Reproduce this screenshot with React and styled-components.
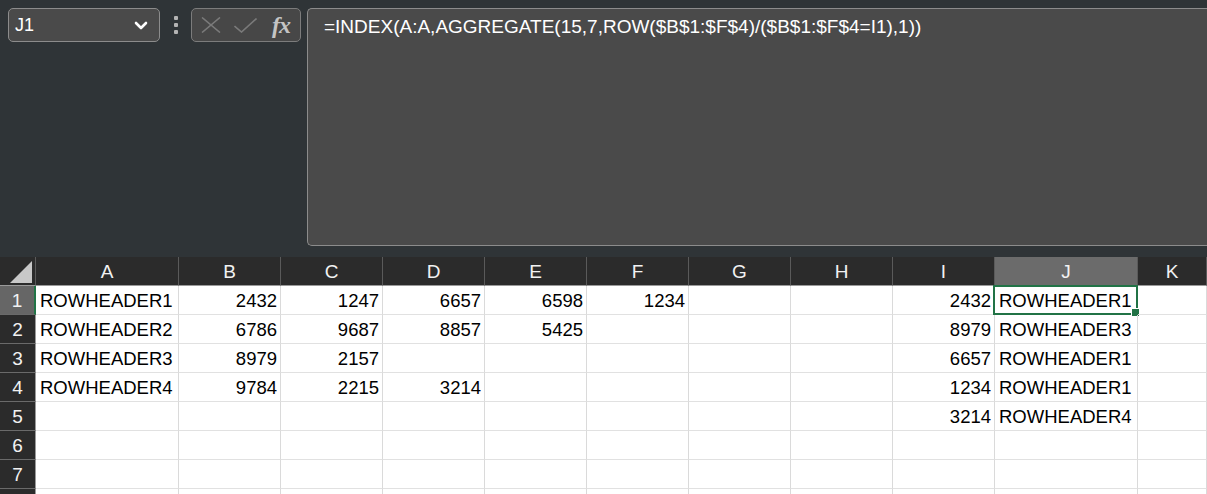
import React from "react";
import styled, { createGlobalStyle } from "styled-components";

const GlobalStyle = createGlobalStyle`
  html, body {
    margin: 0;
    padding: 0;
    background: #2f3437;
    overflow: hidden;
  }
  * { box-sizing: border-box; }
`;

// 상단 수식 입력줄
const Page = styled.div`
  width: 1207px;
  height: 494px;
  overflow: hidden;
  display: flex;
  flex-direction: column;
  background: #2f3437;
  font-family: "Liberation Sans", Arial, sans-serif;
`;

const FormulaBar = styled.div`
  display: flex;
  align-items: flex-start;
  padding: 8px 0 11px 8px;
  height: 257px;
  flex-shrink: 0;
`;

const NameBox = styled.div`
  width: 152px;
  height: 34px;
  border: 1px solid #8c8c8c;
  border-radius: 5px;
  background: #4a4a4a;
  display: flex;
  align-items: center;
  justify-content: space-between;
  padding: 0 11px 0 6px;
  color: #ffffff;
  font-size: 18px;
`;

const Dots = styled.div`
  width: 31px;
  height: 34px;
  display: flex;
  flex-direction: column;
  align-items: center;
  justify-content: center;
  gap: 3px;

  span {
    width: 4px;
    height: 4px;
    background: #b4b4b4;
    border-radius: 1px;
  }
`;

const ButtonBox = styled.div`
  width: 110px;
  height: 34px;
  border: 1px solid #7c7c7c;
  border-radius: 5px;
  background: #474747;
  display: flex;
  align-items: center;
  padding: 0 6px 0 9px;
  gap: 13px;
  margin-right: 6px;
`;

const Fx = styled.span`
  font-family: "Liberation Serif", "Times New Roman", serif;
  font-style: italic;
  font-weight: bold;
  font-size: 24px;
  color: #c4c4c4;
  margin-left: 2px;
  letter-spacing: -1px;
  line-height: 1;
`;

const FormulaInput = styled.div`
  flex: 1;
  height: 238px;
  border: 1px solid #8c8c8c;
  border-right: none;
  border-radius: 5px 0 0 5px;
  background: #4a4a4a;
  color: #ffffff;
  font-size: 19px;
  padding: 7px 0 0 16px;
  white-space: nowrap;
`;

// 시트 영역
const Sheet = styled.div`
  display: grid;
  grid-template-columns: 36px 143px repeat(8, 102px) 143px 1fr;
  grid-auto-rows: 29px;
  background: #ffffff;
  flex: 1;
`;

const ColHeader = styled.div`
  background: ${(p) => (p.active ? "#6b6b6b" : "#2b2b2b")};
  color: #f2f2f2;
  font-size: 19px;
  display: flex;
  align-items: center;
  justify-content: center;
  border-right: 1px solid #5a5a5a;
  border-bottom: 1px solid #9a9a9a;
  padding-top: 1px;
`;

const Corner = styled.div`
  background: #2b2b2b;
  border-right: 1px solid #5a5a5a;
  border-bottom: 1px solid #9a9a9a;
  display: flex;
  align-items: flex-end;
  justify-content: flex-end;
  padding: 0 3px 2px 0;
`;

const RowHeader = styled.div`
  background: ${(p) => (p.active ? "#666666" : "#2b2b2b")};
  color: #f2f2f2;
  font-size: 19px;
  display: flex;
  align-items: center;
  justify-content: center;
  border-bottom: 1px solid #6a6a6a;
  border-right: ${(p) => (p.active ? "2px solid #217346" : "1px solid #9a9a9a")};
  padding-top: 1px;
`;

const Cell = styled.div`
  position: relative;
  color: #000000;
  font-size: 18.5px;
  display: flex;
  align-items: center;
  justify-content: ${(p) => (p.num ? "flex-end" : "flex-start")};
  padding: 2px 3px 0 4px;
  border-right: 1px solid #dadada;
  border-bottom: 1px solid #e1e1e1;
  white-space: nowrap;
`;

const Selection = styled.div`
  position: absolute;
  left: -2px;
  top: -1px;
  right: -1px;
  bottom: -1px;
  border: 2px solid #217346;
  pointer-events: none;

  &::after {
    content: "";
    position: absolute;
    right: -4px;
    bottom: -4px;
    width: 7px;
    height: 7px;
    background: #217346;
    border: 1px solid #ffffff;
  }
`;

const columns = ["A", "B", "C", "D", "E", "F", "G", "H", "I", "J", "K"];

const rows = [
  ["ROWHEADER1", 2432, 1247, 6657, 6598, 1234, "", "", 2432, "ROWHEADER1", ""],
  ["ROWHEADER2", 6786, 9687, 8857, 5425, "", "", "", 8979, "ROWHEADER3", ""],
  ["ROWHEADER3", 8979, 2157, "", "", "", "", "", 6657, "ROWHEADER1", ""],
  ["ROWHEADER4", 9784, 2215, 3214, "", "", "", "", 1234, "ROWHEADER1", ""],
  ["", "", "", "", "", "", "", "", 3214, "ROWHEADER4", ""],
  ["", "", "", "", "", "", "", "", "", "", ""],
  ["", "", "", "", "", "", "", "", "", "", ""],
  ["", "", "", "", "", "", "", "", "", "", ""],
];

const ChevronIcon = () => (
  <svg width="14" height="9" viewBox="0 0 14 9">
    <path d="M2 2 L7 7 L12 2" fill="none" stroke="#ffffff" strokeWidth="2.6" strokeLinecap="round" strokeLinejoin="round" />
  </svg>
);

const CancelIcon = () => (
  <svg width="20" height="16" viewBox="0 0 20 16">
    <path d="M1 0.5 L19 15.5 M19 0.5 L1 15.5" stroke="#7a7a7a" strokeWidth="1.6" />
  </svg>
);

const CheckIcon = () => (
  <svg width="23" height="15" viewBox="0 0 23 15">
    <path d="M0.5 8 L7.5 14 L22.5 0.5" fill="none" stroke="#7a7a7a" strokeWidth="1.6" />
  </svg>
);

const SelectAll = () => (
  <svg width="22" height="22" viewBox="0 0 22 22">
    <polygon points="22,0 22,22 0,22" fill="#c8c8c8" />
  </svg>
);

const App = () => {
  return (
    <Page>
      <GlobalStyle />
      <FormulaBar>
        <NameBox>
          <span>J1</span>
          <ChevronIcon />
        </NameBox>
        <Dots>
          <span />
          <span />
          <span />
        </Dots>
        <ButtonBox>
          <CancelIcon />
          <CheckIcon />
          <Fx>fx</Fx>
        </ButtonBox>
        <FormulaInput>=INDEX(A:A,AGGREGATE(15,7,ROW($B$1:$F$4)/($B$1:$F$4=I1),1))</FormulaInput>
      </FormulaBar>
      <Sheet>
        <Corner>
          <SelectAll />
        </Corner>
        {columns.map((c) => (
          <ColHeader key={c} active={c === "J"}>
            {c}
          </ColHeader>
        ))}
        {rows.map((row, r) => (
          <React.Fragment key={r}>
            {/* 8행은 화면 아래로 잘려 번호가 보이지 않음 */}
            <RowHeader active={r === 0}>{r < 7 ? r + 1 : ""}</RowHeader>
            {row.map((v, c) => (
              <Cell key={c} num={typeof v === "number"}>
                {v}
                {r === 0 && c === 9 && <Selection />}
              </Cell>
            ))}
          </React.Fragment>
        ))}
      </Sheet>
    </Page>
  );
};

export default App;
